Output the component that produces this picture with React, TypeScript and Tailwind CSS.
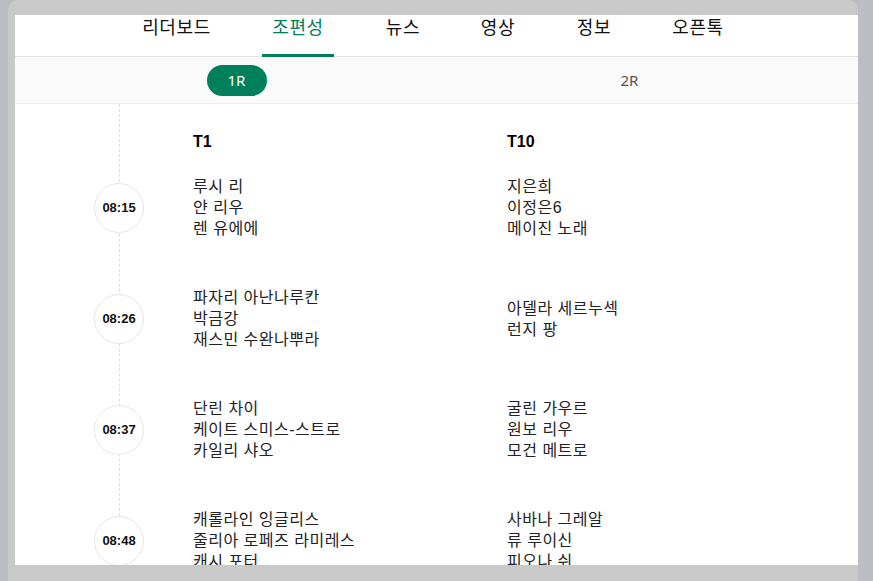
import React from 'react';

const tabs = [
  { label: '리더보드', w: 'w-[121px]' },
  { label: '조편성', w: 'w-[122px]' },
  { label: '뉴스', w: 'w-[88px]' },
  { label: '영상', w: 'w-[102px]' },
  { label: '정보', w: 'w-[90px]' },
  { label: '오픈톡', w: 'w-[118px]' },
];

const groups = [
  {
    time: '08:15',
    t1: ['루시 리', '얀 리우', '렌 유에에'],
    t10: ['지은희', '이정은6', '메이진 노래'],
  },
  {
    time: '08:26',
    t1: ['파자리 아난나루칸', '박금강', '재스민 수완나뿌라'],
    t10: ['아델라 세르누섹', '런지 팡'],
  },
  {
    time: '08:37',
    t1: ['단린 차이', '케이트 스미스-스트로', '카일리 샤오'],
    t10: ['굴린 가우르', '원보 리우', '모건 메트로'],
  },
  {
    time: '08:48',
    t1: ['캐롤라인 잉글리스', '줄리아 로페즈 라미레스', '캐시 포터'],
    t10: ['사바나 그레알', '류 루이신', '피오나 쉬'],
  },
];

const font = { fontFamily: '"Liberation Sans", "Noto Sans CJK KR", sans-serif' };

function Names({ names }: { names: string[] }) {
  return (
    <div className="flex flex-col">
      {names.map(n => (
        <span key={n} className="text-[16px] leading-[21px] tracking-[0.5px] text-[#222222] whitespace-nowrap">
          {n}
        </span>
      ))}
    </div>
  );
}

export default function App() {
  return (
    <div className="w-[873px] h-[581px] bg-[#bdbec3] overflow-hidden flex" style={font}>
      <div className="ml-[8px] w-[850px] h-full bg-[#c9c9c9] rounded-t-[10px] pt-[15px] pb-[16px] pl-[7px] flex flex-col">
        <div className="flex-1 bg-white overflow-hidden flex flex-col">
          {/* tabs */}
          <div className="h-[42px] shrink-0 border-b border-[#e3e3e3] flex pl-[101px]">
            {tabs.map((t, i) => (
              <div key={t.label} className={`${t.w} flex flex-col items-center`}>
                <span
                  className={`text-[18px] leading-[24px] pt-[1px] tracking-[0.6px] ${i === 1 ? 'text-[#00805a]' : 'text-[#111111]'}`}
                >
                  {t.label}
                </span>
                {i === 1 && <div className="mt-auto mb-[-1px] w-[72px] h-[3px] bg-[#00805a]" />}
              </div>
            ))}
          </div>

          {/* rounds */}
          <div className="h-[47px] shrink-0 bg-[#fafafa] border-b border-[#eeeeee]" style={{ fontFamily: '"Noto Sans", sans-serif' }}>
            <div className="ml-[25px] w-[786px] h-full grid grid-cols-2 items-center">
              <div className="flex justify-center">
                <span className="w-[60px] h-[31px] rounded-full bg-[#00805a] text-white text-[15px] flex items-center justify-center">
                  1R
                </span>
              </div>
              <div className="flex justify-center">
                <span className="text-[15px] text-[#555555]">2R</span>
              </div>
            </div>
          </div>

          {/* schedule */}
          <div className="relative flex-1">
            <div className="absolute left-[104px] top-0 bottom-0 border-l border-dashed border-[#dddddd]" />
            <div className="relative grid grid-cols-[178px_314px_1fr]">
              <div className="h-[48px]" />
              <div className="pt-[28px] text-[16px] leading-[20px] font-bold text-black">T1</div>
              <div className="pt-[28px] text-[16px] leading-[20px] font-bold text-black">T10</div>
              {groups.map(g => (
                <React.Fragment key={g.time}>
                  <div className="h-[111px] flex items-center pl-[79px]">
                    <div className="w-[50px] h-[50px] rounded-full border border-[#e6e6e6] bg-white flex items-center justify-center text-[13px] font-bold text-[#111111]">
                      {g.time}
                    </div>
                  </div>
                  <div className="h-[111px] flex items-center">
                    <Names names={g.t1} />
                  </div>
                  <div className="h-[111px] flex items-center">
                    <Names names={g.t10} />
                  </div>
                </React.Fragment>
              ))}
            </div>
          </div>
        </div>
      </div>
    </div>
  );
}
